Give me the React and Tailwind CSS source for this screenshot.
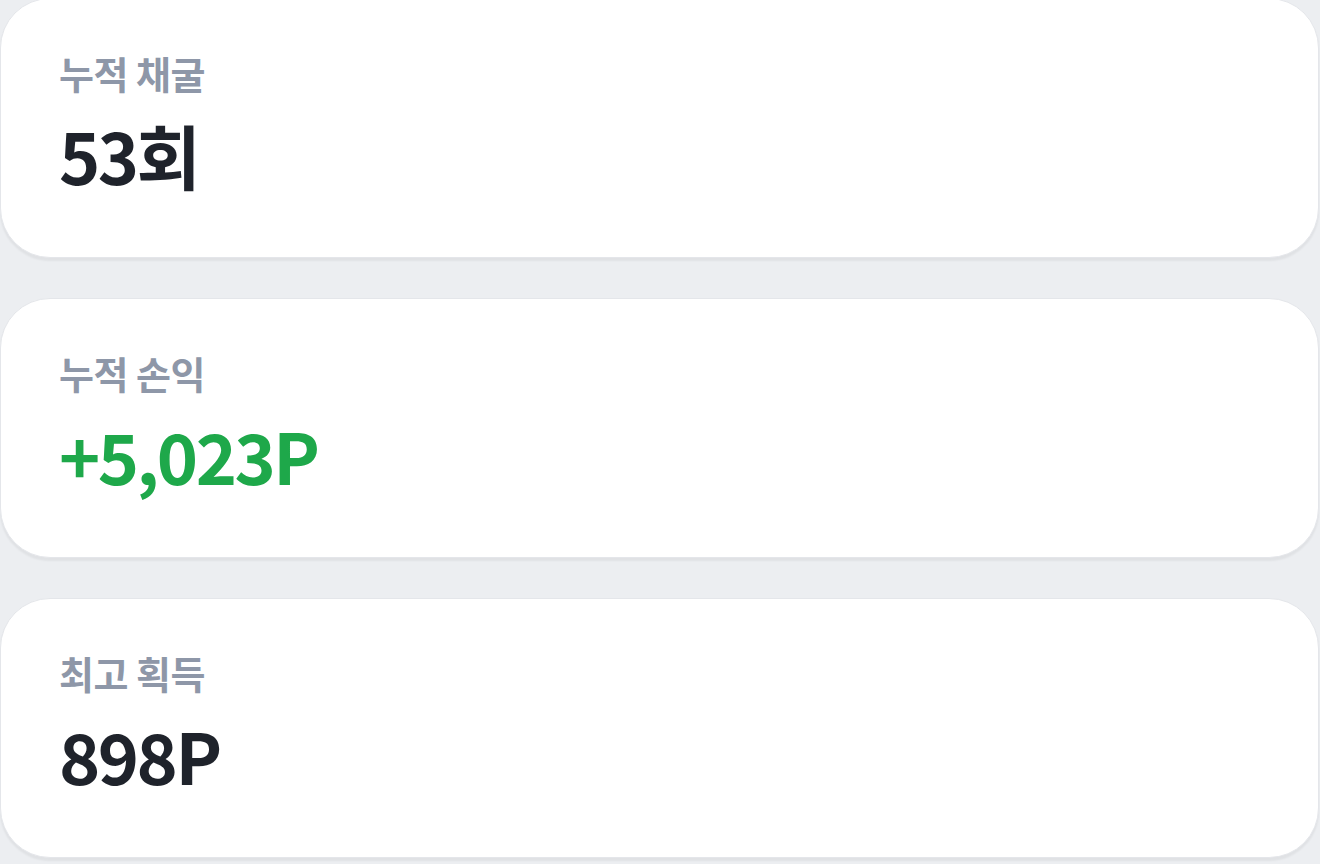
import React from "react";

const stats = [
  { label: "누적 채굴", value: "53회", color: "text-[#1f232b]" },
  { label: "누적 손익", value: "+5,023P", color: "text-[#1ea84a]" },
  { label: "최고 획득", value: "898P", color: "text-[#1f232b]" },
];

const StatCard = ({ label, value, color }) => {
  return (
    <div className="h-[260px] w-[1319px] shrink-0 rounded-[50px] bg-white border border-[#e4e6ea] shadow-[0_3px_2px_rgba(0,0,0,0.05)] px-[58px] pt-[46px]">
      <div className="text-[38px] leading-[56px] font-semibold text-[#8e97a8] tracking-[-0.5px]">{label}</div>
      <div className={`mt-[12px] text-[70px] leading-[84px] font-semibold tracking-[-2.5px] ${color}`}>{value}</div>
    </div>
  );
};

export default function App() {
  return (
    <div
      className="h-[864px] w-[1320px] overflow-hidden bg-[#eceef1]"
      style={{ fontFamily: '"Noto Sans CJK KR", "Noto Sans", sans-serif' }}
    >
      <div className="flex flex-col gap-[40px] -mt-[2px]">
        {stats.map((s) => (
          <StatCard key={s.label} {...s} />
        ))}
      </div>
    </div>
  );
}
